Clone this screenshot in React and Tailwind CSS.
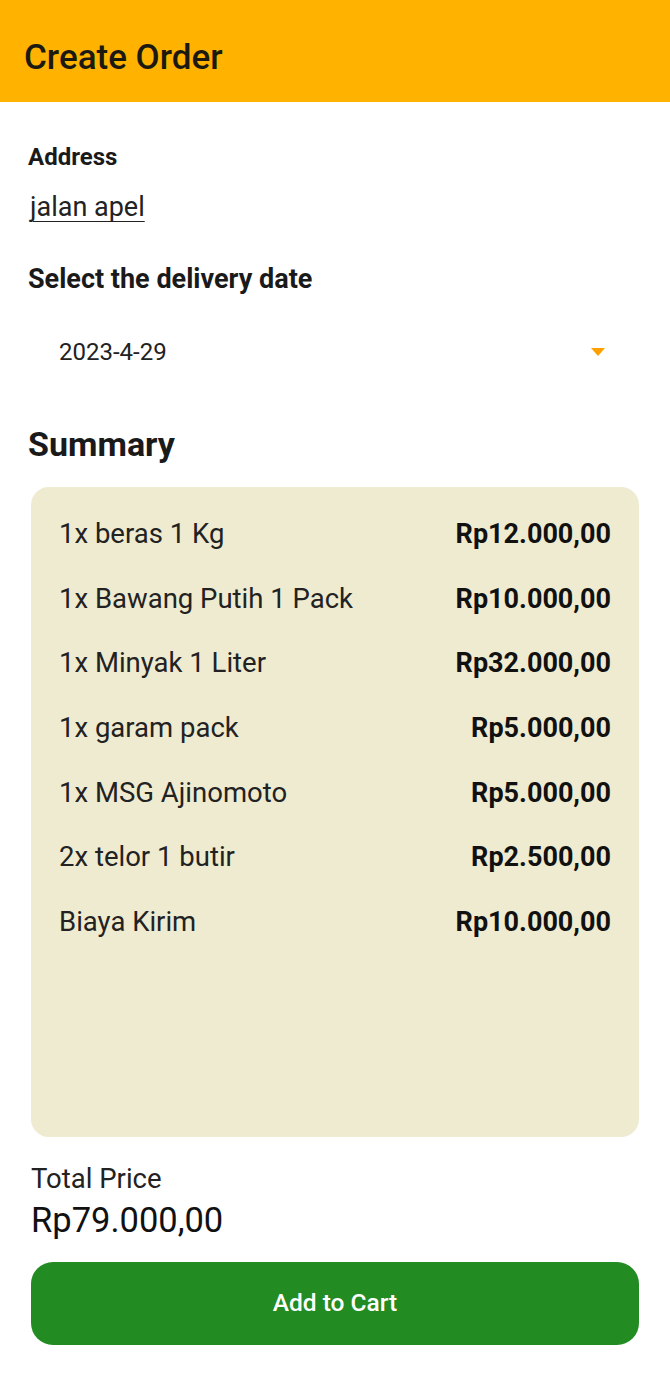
import React from 'react';

const items = [
  ['1x beras 1 Kg', 'Rp12.000,00'],
  ['1x Bawang Putih 1 Pack', 'Rp10.000,00'],
  ['1x Minyak 1 Liter', 'Rp32.000,00'],
  ['1x garam pack', 'Rp5.000,00'],
  ['1x MSG Ajinomoto', 'Rp5.000,00'],
  ['2x telor 1 butir', 'Rp2.500,00'],
  ['Biaya Kirim', 'Rp10.000,00'],
];

export default function App() {
  return (
    <div className="w-[670px] min-h-[1379px] bg-white text-[#1a1a1a] font-['Roboto',sans-serif]">
      <header className="h-[102px] bg-[#FFB300] flex items-center px-6 pt-[14px]">
        <h1 className="text-[35px] font-medium leading-[40px] text-[#1c1a10]">Create Order</h1>
      </header>

      <div className="px-7 pt-[40px]">
        <p className="text-[24px] font-bold leading-[30px]">Address</p>
        <p className="mt-[20px] ml-[2px] text-[27px] leading-[30px] underline underline-offset-[5px] decoration-[1px] text-[#222]">jalan apel</p>
        <p className="mt-[42px] text-[27px] font-bold leading-[30px]">Select the delivery date</p>

        <div className="mt-[43px] flex items-center justify-between pl-[31px] pr-[36px]">
          <span className="text-[24px] leading-[30px] text-[#222]">2023-4-29</span>
          <svg width="16" height="10" viewBox="0 0 16 10">
            <path d="M1 1h14L8 9z" fill="#FFA000" />
          </svg>
        </div>

        <h2 className="mt-[59px] text-[34px] font-bold leading-[36px]">Summary</h2>
      </div>

      <div className="mx-[31px] mt-[25px] h-[650px] rounded-[18px] bg-[#EFEBD0] px-7 pt-[32px]">
        <div className="flex flex-col gap-[34.7px]">
          {items.map(([name, price]) => (
            <div key={name} className="flex items-center justify-between leading-[30px]">
              <span className="text-[27.5px] text-[#222]">{name}</span>
              <span className="text-[27px] font-bold text-[#111]">{price}</span>
            </div>
          ))}
        </div>
      </div>

      <div className="px-[31px] pt-[27px]">
        <p className="text-[27.5px] leading-[30px] text-[#222]">Total Price</p>
        <p className="mt-[6px] text-[34.5px] leading-[40px] text-[#111]">Rp79.000,00</p>
        <button className="mt-[22px] w-full h-[83px] rounded-[22px] bg-[#228B22] text-white text-[24.5px] font-medium">
          Add to Cart
        </button>
      </div>
    </div>
  );
}
